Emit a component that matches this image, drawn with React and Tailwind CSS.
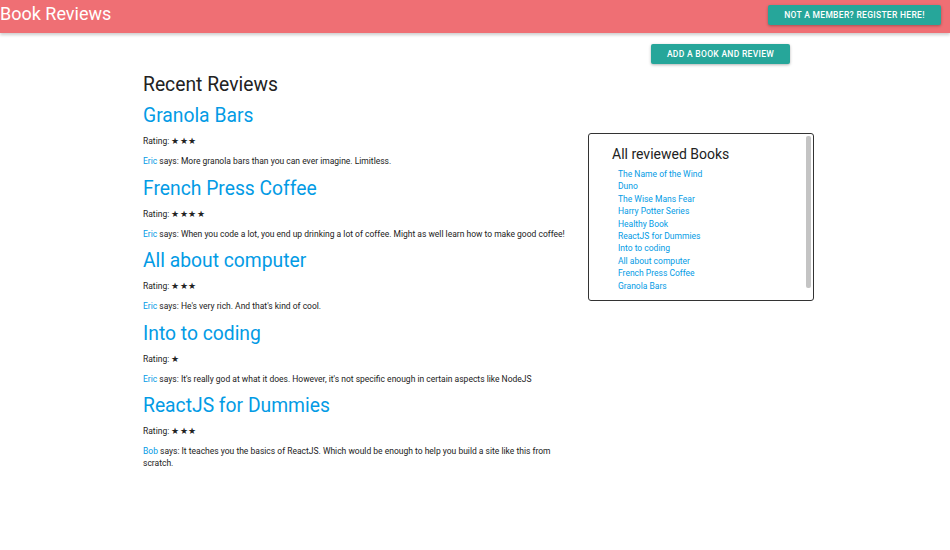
import React from 'react';

// Reseñas recientes
const reviews = [
    { title: "Granola Bars", stars: 3, user: "Eric", text: "More granola bars than you can ever imagine. Limitless." },
    { title: "French Press Coffee", stars: 4, user: "Eric", text: "When you code a lot, you end up drinking a lot of coffee. Might as well learn how to make good coffee!" },
    { title: "All about computer", stars: 3, user: "Eric", text: "He's very rich. And that's kind of cool." },
    { title: "Into to coding", stars: 1, user: "Eric", text: "It's really god at what it does. However, it's not specific enough in certain aspects like NodeJS" },
    { title: "ReactJS for Dummies", stars: 3, user: "Bob", text: "It teaches you the basics of ReactJS. Which would be enough to help you build a site like this from scratch." },
];

const books = [
    "The Name of the Wind",
    "Duno",
    "The Wise Mans Fear",
    "Harry Potter Series",
    "Healthy Book",
    "ReactJS for Dummies",
    "Into to coding",
    "All about computer",
    "French Press Coffee",
    "Granola Bars",
];

const App = () => {
    return (
        <div className="min-h-screen bg-white font-['Roboto',sans-serif] text-[#222]">
            {/* Barra superior */}
            <div className="h-[33px] bg-[#ef6f74] flex items-start justify-between pr-[9px] shadow-[0_2px_3px_rgba(0,0,0,0.2)]">
                <span className="text-white text-[18px] leading-[27px]">Book Reviews</span>
                <button className="mt-[5px] bg-[#26a69a] text-white uppercase text-[8.5px] font-medium tracking-[0.3px] h-[20px] w-[173px] rounded-[2px] shadow-[0_1px_3px_rgba(0,0,0,0.3)]">
                    Not a member? Register here!
                </button>
            </div>

            <div className="flex justify-end pr-[160px] pt-[11px]">
                <button className="bg-[#26a69a] text-white uppercase text-[8.5px] font-medium tracking-[0.3px] h-[20px] w-[139px] rounded-[2px] shadow-[0_1px_3px_rgba(0,0,0,0.3)]">
                    Add a book and review
                </button>
            </div>

            <div className="flex items-start pt-[9px]">
                {/* Columna de reseñas */}
                <div className="ml-[143px] w-[432px]">
                    <h2 className="text-[19.3px] leading-[24px] mb-[6px]">Recent Reviews</h2>
                    {reviews.map((r) => (
                        <div key={r.title} className="pb-[8.5px]">
                            <h3 className="text-[19.3px] leading-[26px] text-[#039be5]">{r.title}</h3>
                            <p className="text-[8.5px] leading-[12px] mt-[6px]">
                                Rating: <span className="tracking-[0.5px]">{"★".repeat(r.stars)}</span>
                            </p>
                            <p className="text-[8.5px] leading-[12px] mt-[8px]">
                                <span className="text-[#039be5]">{r.user}</span> says: {r.text}
                            </p>
                        </div>
                    ))}
                </div>

                {/* Lista de libros */}
                <div className="ml-[13px] mt-[60px] w-[226px] h-[168px] border border-[#333] rounded-[3px] flex">
                    <div className="flex-1 pt-[11px] pl-[23px]">
                        <h4 className="text-[14px] leading-[18px]">All reviewed Books</h4>
                        <ul className="mt-[5px] ml-[6px]">
                            {books.map((b) => (
                                <li key={b} className="text-[8.5px] leading-[12.4px] text-[#039be5]">{b}</li>
                            ))}
                        </ul>
                    </div>
                    <div className="w-[7px] pt-[2px] pb-[12px] pr-[1px]">
                        <div className="w-[5px] h-full bg-[#c4c4c4] rounded-[2px]"></div>
                    </div>
                </div>
            </div>
        </div>
    );
};

export default App;
